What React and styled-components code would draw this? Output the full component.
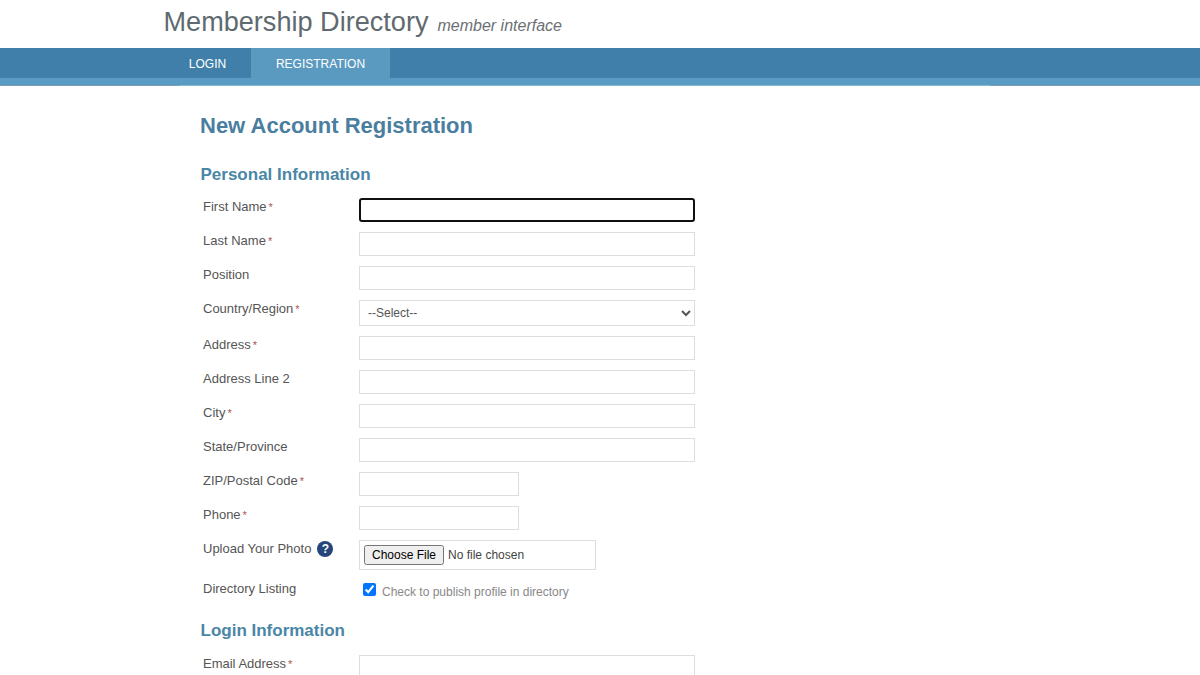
import React from 'react';
import styled, { createGlobalStyle } from 'styled-components';

const GlobalStyle = createGlobalStyle`
  html, body {
    margin: 0;
    padding: 0;
    height: 100%;
    overflow: hidden;
    background: #fff;
    font-family: "Liberation Sans", Arial, sans-serif;
  }
`;

const Masthead = styled.header`
  height: 48px;
  padding-left: 163.5px;
  display: flex;
  align-items: baseline;
  gap: 9px;
  box-sizing: border-box;
  padding-top: 6px;
`;

const SiteTitle = styled.h1`
  margin: 0;
  font-size: 27.1px;
  line-height: 32px;
  font-weight: normal;
  color: #5f6a70;
`;

const SiteTagline = styled.span`
  font-size: 16px;
  font-style: italic;
  color: #6b7074;
`;

const NavBar = styled.nav`
  background: #3f7fa9;
  height: 30px;
  box-sizing: border-box;
  padding-left: 164px;
  display: flex;
  position: relative;
  z-index: 1;
`;

const NavTab = styled.a`
  display: flex;
  align-items: center;
  justify-content: center;
  width: ${({ $width }) => $width}px;
  height: 30px;
  padding-top: 1px;
  box-sizing: border-box;
  font-size: 12px;
  color: #fff;
  background: ${({ $active }) => ($active ? '#5b9ac0' : '#3f7fa9')};
`;

const Strip = styled.div`
  height: 8px;
  background: #5a9bc4;
  box-shadow: inset 0 -1px 0 #7b9db5;
`;

const StripCenter = styled.div`
  height: 8px;
  margin: 0 210px 0 180px;
  background: #5a9bc4;
  box-shadow: inset 0 -1px 0 #86bcd8;
`;

const Main = styled.main`
  padding: 26px 0 0 200px;
`;

const PageTitle = styled.h2`
  margin: 0 0 25px;
  font-size: 22px;
  line-height: 28px;
  font-weight: bold;
  color: #4a7e9f;
`;

const SectionTitle = styled.h3`
  margin: ${({ $spaced }) => ($spaced ? '22px 0 14px' : '0 0 13px')};
  padding-left: 0.5px;
  font-size: 17px;
  line-height: 20px;
  font-weight: bold;
  color: #4a86a6;
`;

const Row = styled.div`
  display: grid;
  grid-template-columns: 156px 1fr;
  margin-left: 3px;
  margin-bottom: ${({ $gap }) => ($gap === undefined ? 10 : $gap)}px;
  align-items: start;
`;

const Label = styled.label`
  display: flex;
  align-items: center;
  padding-top: 1px;
  font-size: 13px;
  line-height: 16px;
  color: #555;
`;

const Required = styled.span`
  color: #a55;
  margin-left: 2px;
  font-size: 11px;
`;

const HelpBadge = styled.span`
  display: inline-flex;
  align-items: center;
  justify-content: center;
  width: 16px;
  height: 16px;
  margin-left: 6px;
  border-radius: 50%;
  background: #24467a;
  color: #fff;
  font-size: 12px;
  font-weight: bold;
`;

const TextInput = styled.div`
  box-sizing: border-box;
  width: ${({ $short }) => ($short ? '160px' : '336px')};
  height: 24px;
  border: ${({ $focused }) => ($focused ? '2px solid #101010' : '1px solid #dedede')};
  border-radius: ${({ $focused }) => ($focused ? '3px' : '0')};
  background: #fff;
`;

const SelectInput = styled.select`
  box-sizing: border-box;
  width: 336px;
  height: 26px;
  padding: 0 4px;
  border: 1px solid #dedede;
  background: #fff;
  font-family: "Liberation Sans", Arial, sans-serif;
  font-size: 12px;
  color: #555;
`;

const FileBox = styled.div`
  box-sizing: border-box;
  width: 237px;
  height: 30px;
  padding: 4px;
  border: 1px solid #dedede;
  overflow: hidden;
`;

const FileInput = styled.input`
  font-family: "Liberation Sans", Arial, sans-serif;
  font-size: 12px;
  color: #444;
`;

const CheckWrap = styled.div`
  display: flex;
  align-items: flex-start;
  gap: 6px;
  padding: 3px 0 0 4px;
`;

const CheckBox = styled.input`
  width: 13px;
  height: 13px;
  margin: 0;
`;

const CheckText = styled.span`
  font-size: 12px;
  line-height: 14px;
  padding-top: 2px;
  color: #888;
`;

const fields = [
  { label: 'First Name', required: true, focused: true },
  { label: 'Last Name', required: true },
  { label: 'Position' },
  { label: 'Country/Region', required: true, select: true },
  { label: 'Address', required: true },
  { label: 'Address Line 2' },
  { label: 'City', required: true },
  { label: 'State/Province' },
  { label: 'ZIP/Postal Code', required: true, short: true },
  { label: 'Phone', required: true, short: true },
];

const Field = ({ label, required, focused, short, select }) => (
  <Row>
    <Label>
      {label}
      {required && <Required>*</Required>}
    </Label>
    {select ? (
      <SelectInput defaultValue="">
        <option value="">--Select--</option>
      </SelectInput>
    ) : (
      <TextInput $focused={focused} $short={short} />
    )}
  </Row>
);

export default function App() {
  return (
    <>
      <GlobalStyle />
      <Masthead>
        <SiteTitle>Membership Directory</SiteTitle>
        <SiteTagline>member interface</SiteTagline>
      </Masthead>
      <NavBar>
        <NavTab $width={87}>LOGIN</NavTab>
        <NavTab $width={139} $active>REGISTRATION</NavTab>
      </NavBar>
      <Strip>
        <StripCenter />
      </Strip>
      <Main>
        <PageTitle>New Account Registration</PageTitle>
        <SectionTitle>Personal Information</SectionTitle>
        {fields.map((field) => (
          <Field key={field.label} {...field} />
        ))}
        <Row>
          <Label>
            Upload Your Photo
            <HelpBadge>?</HelpBadge>
          </Label>
          <FileBox>
            <FileInput type="file" />
          </FileBox>
        </Row>
        <Row $gap={0}>
          <Label>Directory Listing</Label>
          <CheckWrap>
            <CheckBox type="checkbox" defaultChecked />
            <CheckText>Check to publish profile in directory</CheckText>
          </CheckWrap>
        </Row>
        <SectionTitle $spaced>Login Information</SectionTitle>
        <Row>
          <Label>
            Email Address
            <Required>*</Required>
          </Label>
          <TextInput />
        </Row>
      </Main>
    </>
  );
}
